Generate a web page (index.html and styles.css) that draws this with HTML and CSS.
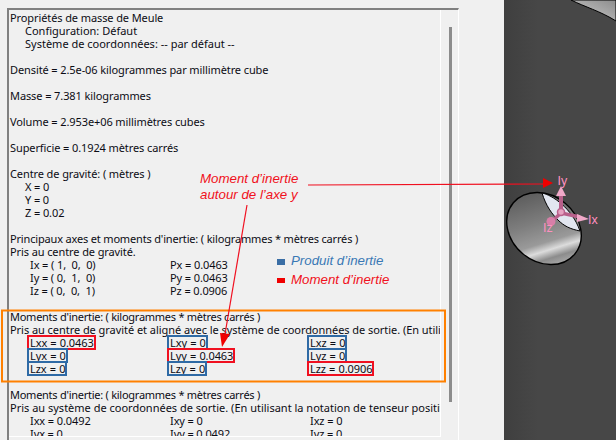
FILE: index.html
```html
<!DOCTYPE html>
<html lang="fr">
<head>
<meta charset="utf-8">
<title>Propriétés de masse</title>
<link rel="stylesheet" href="styles.css">
</head>
<body>
<div class="page">
  <section class="panel">
    <div class="frame">
      <div class="report">
        <div class="line">Propriétés de masse de Meule</div>
        <div class="line in1 loose">Configuration: Défaut</div>
        <div class="line in1 loose">Système de coordonnées: -- par défaut --</div>
        <div class="gap"></div>
        <div class="line">Densité = 2.5e-06 kilogrammes par millimètre cube</div>
        <div class="gap"></div>
        <div class="line">Masse = 7.381 kilogrammes</div>
        <div class="gap"></div>
        <div class="line">Volume = 2.953e+06 millimètres cubes</div>
        <div class="gap"></div>
        <div class="line">Superficie = 0.1924 mètres carrés</div>
        <div class="gap"></div>
        <div class="line">Centre de gravité: ( mètres )</div>
        <div class="line in1">X = 0</div>
        <div class="line in1">Y = 0</div>
        <div class="line in1">Z = 0.02</div>
        <div class="gap"></div>
        <div class="line snug">Principaux axes et moments d'inertie: ( kilogrammes * mètres carrés )</div>
        <div class="line">Pris au centre de gravité.</div>
        <div class="grid2">
          <span class="pre">Ix = ( 1,  0,  0)</span><span>Px = 0.0463</span>
          <span class="pre">Iy = ( 0,  1,  0)</span><span>Py = 0.0463</span>
          <span class="pre">Iz = ( 0,  0,  1)</span><span>Pz = 0.0906</span>
        </div>
        <div class="gap"></div>
        <div class="line tight">Moments d'inertie: ( kilogrammes * mètres carrés )</div>
        <div class="line medium">Pris au centre de gravité et aligné avec le système de coordonnées de sortie. (En utilisant la notation de tenseur positive)</div>
        <div class="grid3">
          <span><b class="tag red">Lxx = 0.0463</b></span><span><b class="tag blue">Lxy = 0</b></span><span><b class="tag blue">Lxz = 0</b></span>
          <span><b class="tag blue">Lyx = 0</b></span><span><b class="tag red">Lyy = 0.0463</b></span><span><b class="tag blue">Lyz = 0</b></span>
          <span><b class="tag blue">Lzx = 0</b></span><span><b class="tag blue">Lzy = 0</b></span><span><b class="tag red">Lzz = 0.0906</b></span>
        </div>
        <div class="gap"></div>
        <div class="line tight">Moments d'inertie: ( kilogrammes * mètres carrés )</div>
        <div class="line loose">Pris au système de coordonnées de sortie. (En utilisant la notation de tenseur positive)</div>
        <div class="grid3">
          <span>Ixx = 0.0492</span><span>Ixy = 0</span><span>Ixz = 0</span>
          <span>Iyx = 0</span><span>Iyy = 0.0492</span><span>Iyz = 0</span>
        </div>
      </div>
      <div class="track"><div class="thumb"></div></div>
    </div>
  </section>
  <section class="view">
    <svg class="scene" width="112" height="440" viewBox="504 0 112 440">
      <defs>
        <linearGradient id="fade" x1="0" x2="1" y1="0" y2="0">
          <stop offset="0" stop-color="#3f3f3f"/>
          <stop offset="0.3" stop-color="#474747"/>
          <stop offset="1" stop-color="#474747"/>
        </linearGradient>
        <linearGradient id="corner" x1="0" x2="1" y1="1" y2="0">
          <stop offset="0" stop-color="#d0d0d0"/>
          <stop offset="1" stop-color="#8c8c8c"/>
        </linearGradient>
        <linearGradient id="wheel" gradientUnits="userSpaceOnUse" x1="510" y1="205" x2="580" y2="250">
          <stop offset="0" stop-color="#5a5a5a"/>
          <stop offset="0.4" stop-color="#7d7d7d"/>
          <stop offset="0.66" stop-color="#9a9a9a"/>
          <stop offset="0.76" stop-color="#dcdcdc"/>
          <stop offset="0.86" stop-color="#8c8c8c"/>
          <stop offset="1" stop-color="#b4b4b4"/>
        </linearGradient>
      </defs>
      <rect x="504" y="0" width="112" height="440" fill="url(#fade)"/>
      <path d="M571 0 C585 7 600 11 616 21 V0 Z" fill="url(#corner)" stroke="#000" stroke-width="1"/>
      <ellipse cx="544" cy="228.500" rx="40" ry="33" transform="rotate(40 544 228.500)" fill="url(#wheel)" stroke="#000" stroke-width="1.400"/>
      <path d="M542 193 C552 195 572 208 580 231 C570 229 564 226 558 220 C552 214 546 206 542 193 Z" fill="#e2e6f0" stroke="#000" stroke-width="1"/>
      <g stroke="#b85f8a" fill="#d77fa8">
        <path d="M561 213 V193" stroke-width="4" fill="none"/>
        <path d="M561 186 L566 196 H556 Z" fill="#f0a8c8" stroke="none"/>
        <path d="M561 213 L580 217" stroke-width="3.500" fill="none"/>
        <path d="M589 219 L577 214 L577 222 Z" fill="#f0a8c8" stroke="none"/>
        <path d="M561 213 L551 222" stroke-width="3.500" fill="none"/>
        <circle cx="551" cy="221.500" r="4.500" stroke="none"/>
        <circle cx="561" cy="212" r="3.500" stroke-width="1.500" fill="#e7a1c1"/>
      </g>
      <text class="axis" x="557.500" y="185">Iy</text>
      <text class="axis" x="588" y="224">Ix</text>
      <text class="axis" x="543" y="232">Iz</text>
    </svg>
  </section>

  <svg class="marks" width="616" height="440" viewBox="0 0 616 440">
    <rect x="2" y="310.500" width="443" height="71" fill="none" stroke="#ff8000" stroke-width="2"/>
    <path d="M308 185 L545 184" fill="none" stroke="#f01020" stroke-width="1.200"/>
    <path d="M553 183 L543 178 V188 Z" fill="#f00000"/>
    <path d="M247 205 L224 340" fill="none" stroke="#f01020" stroke-width="1.200"/>
    <path d="M222 347 L220 333 L230 334 Z" fill="#f00000"/>
    <rect x="277" y="259" width="8" height="6" fill="#3a6ea5"/>
    <rect x="277" y="278" width="8" height="5" fill="#f00000"/>
  </svg>
  <div class="note callout">Moment d’inertie<br>autour de l’axe y</div>
  <div class="note legend-a">Produit d’inertie</div>
  <div class="note legend-b">Moment d’inertie</div>
</div>
</body>
</html>
```

FILE: styles.css
```css
* { box-sizing: border-box; }
html, body { margin: 0; padding: 0; }
body { width: 616px; height: 440px; overflow: hidden; background: #f0f0f0; }

.page {
  position: relative;
  display: flex;
  width: 616px;
  height: 440px;
  font-family: "Noto Sans", sans-serif;
  font-size: 11px;
  line-height: 13px;
  letter-spacing: -0.1px;
  color: #0c0c14;
}

.panel {
  width: 504px;
  height: 440px;
  padding: 8px 45px 0 7px;
  background: #f0f0f0;
}
.frame {
  display: flex;
  height: 432px;
  border-top: 2px solid #808080;
  border-left: 2px solid #808080;
  border-right: 1px solid #ffffff;
}
.report {
  width: 432px;
  height: 427px;
  padding: 1px 0 0 1px;
  overflow: hidden;
  white-space: nowrap;
  border-right: 1px solid #ffffff;
  border-bottom: 1px solid #ffffff;
}
.line { height: 13px; }
.in1 { padding-left: 15px; }
.gap { height: 13px; }
.pre { white-space: pre; }
.loose { letter-spacing: 0; }
.medium { letter-spacing: -0.05px; }
.snug { letter-spacing: -0.17px; }
.tight { letter-spacing: -0.26px; }

.grid2, .grid3 {
  display: grid;
  padding-left: 20px;
  grid-auto-rows: 13px;
}
.grid2 { grid-template-columns: 140px 140px; }
.grid3 { grid-template-columns: 140px 140px 140px; }

.tag {
  display: inline-block;
  font-weight: 400;
  line-height: 13px;
  height: 13px;
  margin-left: -2px;
  padding: 0 1px 0 2px;
  word-spacing: 0.5px;
}
.tag.red { outline: 2px solid #f01020; outline-offset: -1px; }
.tag.blue { outline: 2px solid #2f6aa5; outline-offset: -1px; }

.track { flex: 1; padding: 17px 0 0 8px; }
.thumb { width: 3px; height: 375px; background: #8c8c8c; }

.view { flex: 1; height: 440px; }
.scene { display: block; }
.axis { font-family: "Liberation Sans", sans-serif; font-size: 12.500px; letter-spacing: 0; fill: #ff8fc0; }

.marks { position: absolute; left: 0; top: 0; pointer-events: none; }

.note {
  position: absolute;
  font-family: "Liberation Sans", sans-serif;
  font-style: italic;
  font-size: 13.3px;
  line-height: 16px;
  letter-spacing: 0;
  white-space: nowrap;
}
.callout { left: 200px; top: 171px; color: #f01020; }
.legend-a { left: 291px; top: 253px; color: #3a78b5; }
.legend-b { left: 291px; top: 272px; color: #f01020; }
```
